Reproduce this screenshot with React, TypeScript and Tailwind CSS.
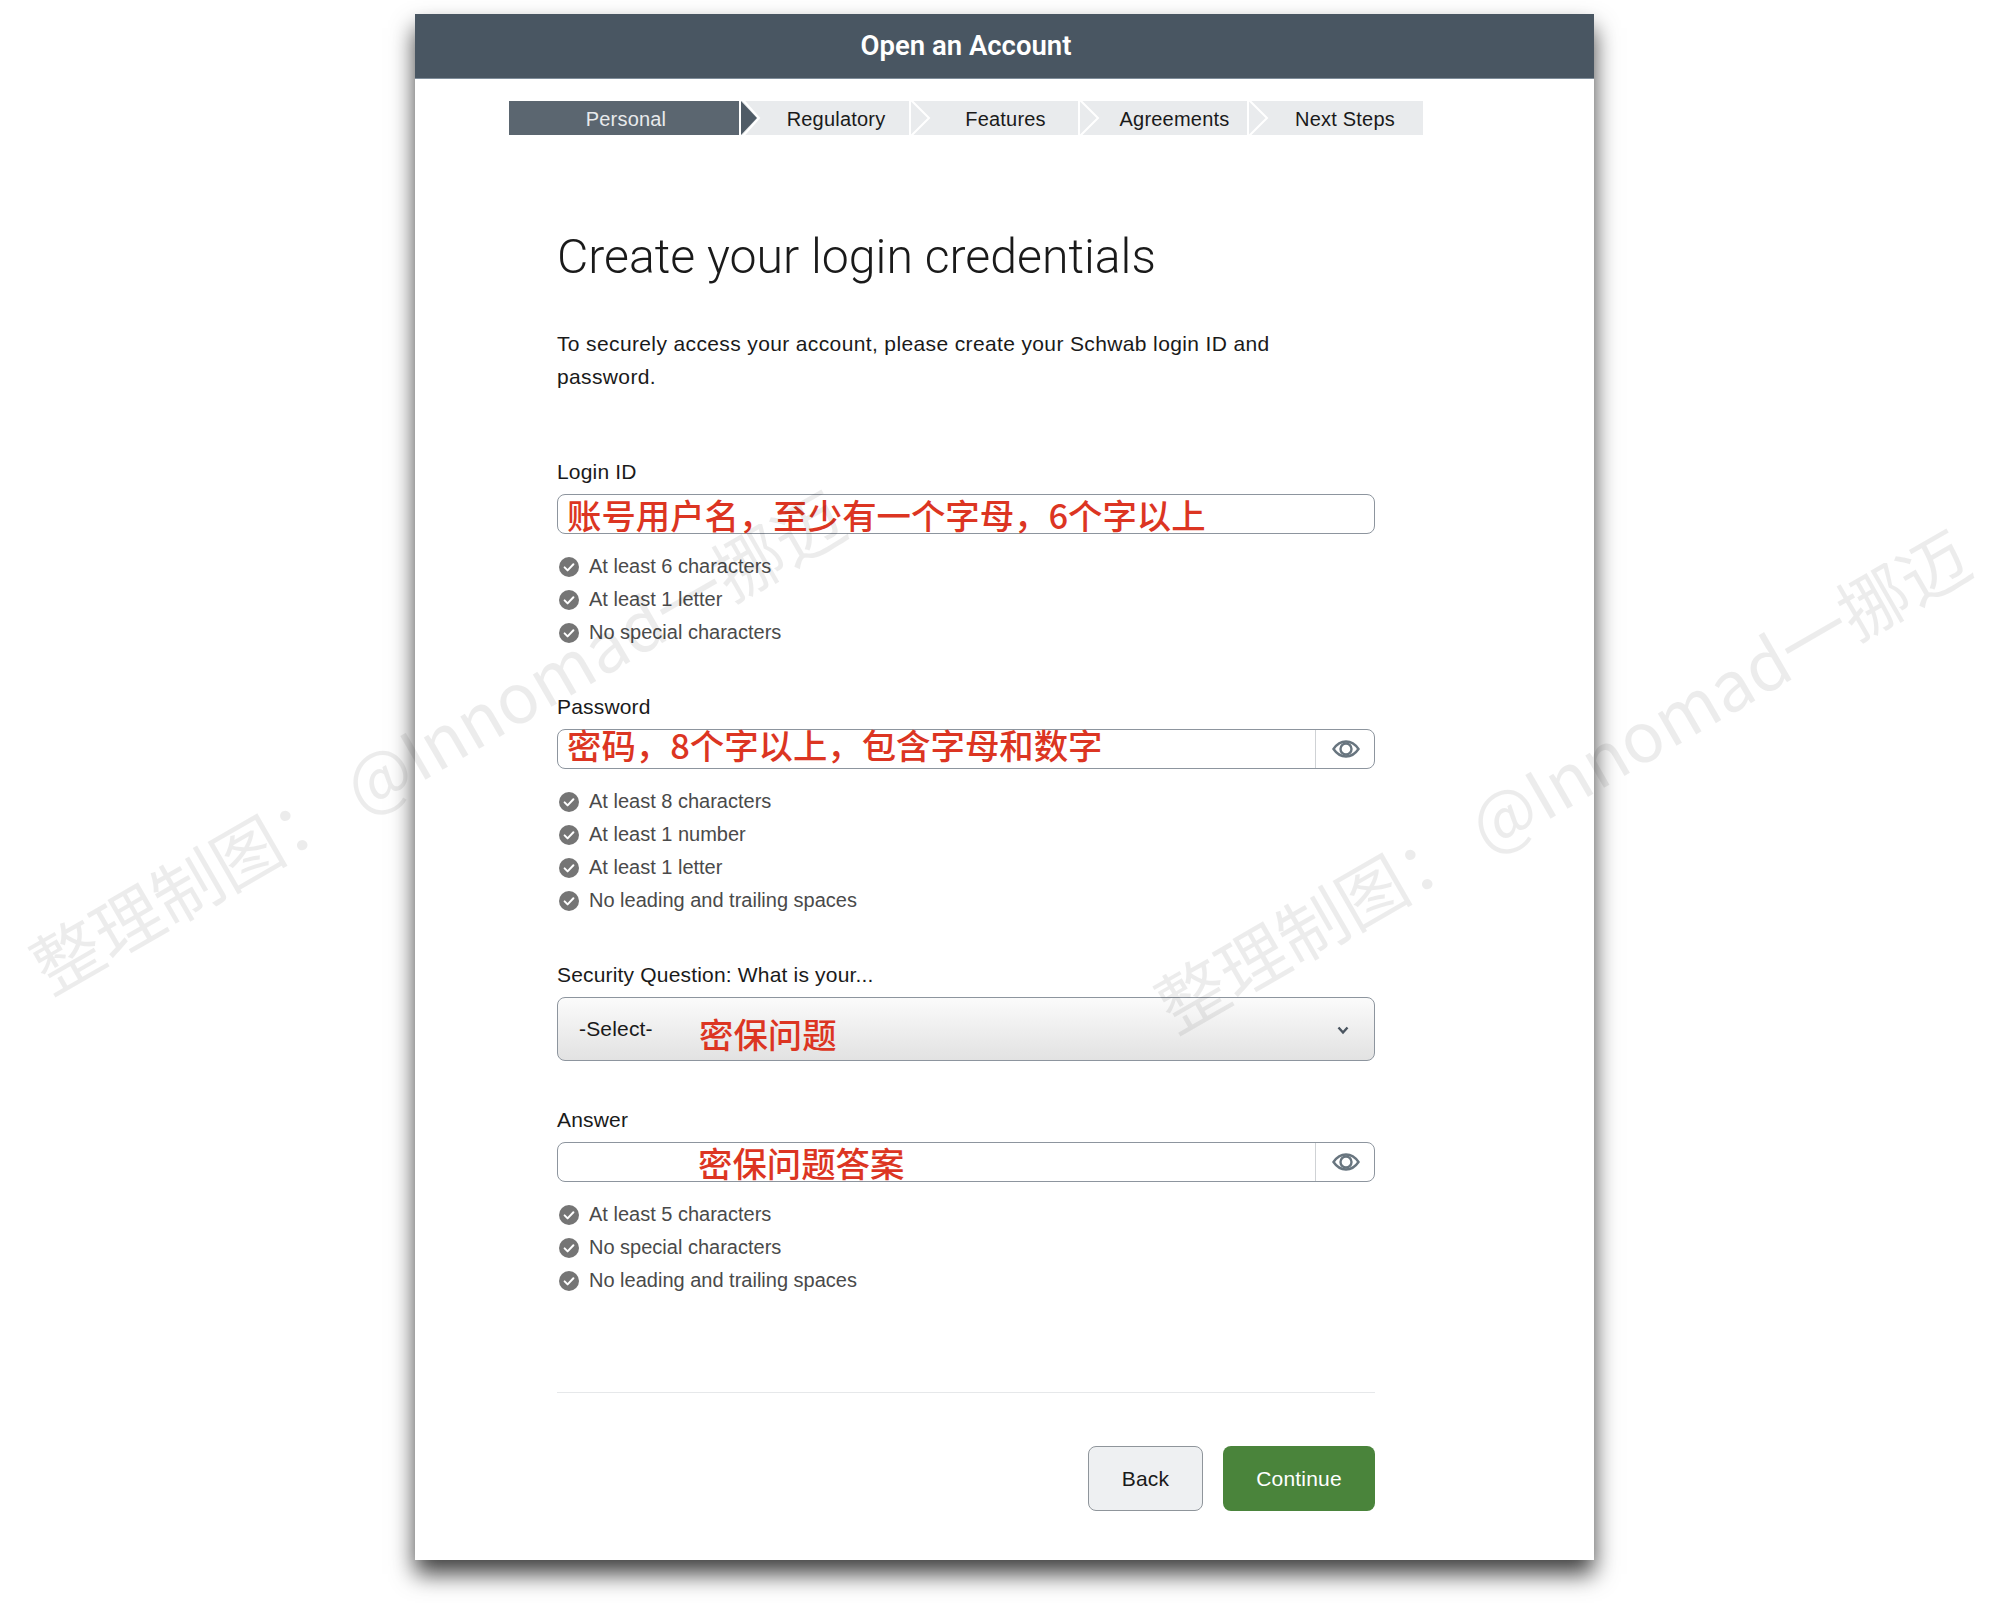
import React from 'react';

const sans = 'font-["Liberation_Sans",Arial,sans-serif]';
const cjk = 'font-["Noto_Sans_CJK_SC","Liberation_Sans",sans-serif]';

const steps = ['Regulatory', 'Features', 'Agreements', 'Next Steps'];

const CheckDot: React.FC = () => (
  <svg width="20" height="20" viewBox="0 0 20 20" className="shrink-0">
    <circle cx="10" cy="10" r="10" fill="#757575" />
    <path d="M5.6 10.4l3 3 5.8-6.2" fill="none" stroke="#fff" strokeWidth="2" strokeLinecap="round" strokeLinejoin="round" />
  </svg>
);

const Eye: React.FC = () => (
  <svg width="28" height="18" viewBox="0 0 28 18" fill="none" stroke="#68757f" strokeWidth="2.4">
    <path d="M1.5 9C5 3.8 9.2 1.5 14 1.5S23 3.8 26.5 9C23 14.2 18.800 16.500 14 16.500S5 14.200 1.500 9Z" />
    <circle cx="14" cy="9" r="5.500" />
  </svg>
);

const Rules: React.FC<{ items: string[] }> = ({ items }) => (
  <ul className="mt-[16px]">
    {items.map((item) => (
      <li key={item} className="flex h-[33px] items-center gap-[10px] pl-[2px] text-[20px] text-[#4a4a4a]">
        <CheckDot />
        <span className="pb-[2px]">{item}</span>
      </li>
    ))}
  </ul>
);

const Label: React.FC<{ children: React.ReactNode }> = ({ children }) => (
  <div className="mb-[5px] flex h-[33px] items-center pb-[2px] text-[21px] tracking-[0.18px] text-[#1a1a1a]">{children}</div>
);

const Field: React.FC<{ note: string; eye?: boolean; noteClass?: string }> = ({ note, eye, noteClass }) => (
  <div className="flex h-[40px] items-stretch rounded-[8px] border-[1.5px] border-[#8d959e] bg-white">
    <div className={`flex flex-1 items-center whitespace-nowrap text-[34.4px] font-medium leading-none text-[#dc3522] ${cjk} ${noteClass ?? 'pl-[9px]'}`}>
      {note}
    </div>
    {eye && (
      <div className="flex w-[59px] items-center justify-center border-l border-[#cfd2d5] pl-[1px]">
        <Eye />
      </div>
    )}
  </div>
);

const Watermark: React.FC<{ className: string }> = ({ className }) => (
  <div className={`pointer-events-none absolute -rotate-[30deg] whitespace-nowrap text-[69px] leading-none text-black/[0.075] ${cjk} ${className}`}>
    整理制图： @Innomad一挪迈
  </div>
);

export default function App() {
  return (
    <div className={`relative h-[1603px] w-[1999px] overflow-hidden bg-white pl-[415px] pt-[14px] ${sans}`}>
      <div className="w-[1179px] bg-white pb-[49px] shadow-[0_14px_22px_rgba(0,0,0,0.75)]">
        <div className="flex h-[65px] items-center justify-center border-b border-[#7f8d9a] bg-[#495662] pr-[77px] font-['Roboto',sans-serif] text-[27.5px] font-semibold text-white">
          Open an Account
        </div>

        {/* progress steps */}
        <div className="ml-[94px] mt-[22px] flex h-[34px] gap-[2px] text-[20px] tracking-[0.2px] text-[#1a1a1a]">
          <div className="flex w-[230px] items-center justify-center bg-[#5b6670] pl-[4px] pt-[1px] text-[#e8eaec]">Personal</div>
          {steps.map((step, i) => (
            <div
              key={step}
              className={`relative flex items-center justify-center bg-[#e9ebed] pt-[1px] ${i === 3 ? 'w-[174px] pl-[18px]' : i === 0 ? 'w-[168px] pl-[22px]' : 'w-[167px] pl-[22px]'}`}
            >
              <svg width="20" height="34" viewBox="0 0 20 34" className="absolute left-0 top-0">
                {i === 0 && <path d="M0 0L16 17L0 34Z" fill="#4f5b66" />}
                <path d={i === 0 ? 'M2 -1L18 17L2 35' : 'M0 -1L18 17L0 35'} fill="none" stroke="#fff" strokeWidth="2" />
              </svg>
              {step}
            </div>
          ))}
        </div>

        <div className="ml-[142px] w-[818px]">
          <h1 className="mt-[92px] h-[60px] whitespace-nowrap font-['Roboto',sans-serif] text-[48.200px] font-light leading-[60px] text-[#1a1a1a]">
            Create your login credentials
          </h1>
          <p className="mt-[40px] w-[740px] text-[21px] leading-[33px] tracking-[0.37px] text-[#1a1a1a]">
            To securely access your account, please create your Schwab login ID and password.
          </p>

          <section className="mt-[63px]">
            <Label>Login ID</Label>
            <Field note="账号用户名，至少有一个字母，6个字以上" />
            <Rules items={['At least 6 characters', 'At least 1 letter', 'No special characters']} />
          </section>

          <section className="mt-[42px]">
            <Label>Password</Label>
            <Field note="密码，8个字以上，包含字母和数字" eye noteClass="pl-[9px] pb-[9px]" />
            <Rules items={['At least 8 characters', 'At least 1 number', 'At least 1 letter', 'No leading and trailing spaces']} />
          </section>

          <section className="mt-[42px]">
            <Label>Security Question: What is your...</Label>
            <div className="flex h-[64px] items-center rounded-[8px] border-[1.5px] border-[#8d959e] bg-gradient-to-b from-[#fbfbfb] to-[#e2e2e2] pl-[21px] pr-[25px]">
              <span className="w-[120px] text-[21px] tracking-[0.18px] text-[#1a1a1a]">-Select-</span>
              <span className={`flex-1 pt-[8px] text-[34.4px] font-medium leading-none text-[#dc3522] ${cjk}`}>密保问题</span>
              <svg width="12" height="9" viewBox="0 0 12 9" fill="none" stroke="#4a5560" strokeWidth="2.4" className="mt-[2px]">
                <path d="M1.500 1.500L6 6.500L10.500 1.500" />
              </svg>
            </div>
          </section>

          <section className="mt-[43px]">
            <Label>Answer</Label>
            <Field note="密保问题答案" eye noteClass="pl-[140px]" />
            <Rules items={['At least 5 characters', 'No special characters', 'No leading and trailing spaces']} />
          </section>

          <div className="mt-[95px] border-t border-[#e6e8ea]" />

          <div className="mt-[53px] flex justify-end gap-[20px] text-[21px] tracking-[0.18px]">
            <button className="h-[65px] w-[115px] rounded-[8px] border-[1.5px] border-[#8f959b] bg-[#eef0f2] text-[#1a1a1a]">Back</button>
            <button className="h-[65px] w-[152px] rounded-[8px] bg-[#4a843b] text-white">Continue</button>
          </div>
        </div>
      </div>

      <Watermark className="left-[-31px] top-[686px] w-[1000px]" />
      <Watermark className="left-[1094px] top-[725px] w-[1000px]" />
    </div>
  );
}
